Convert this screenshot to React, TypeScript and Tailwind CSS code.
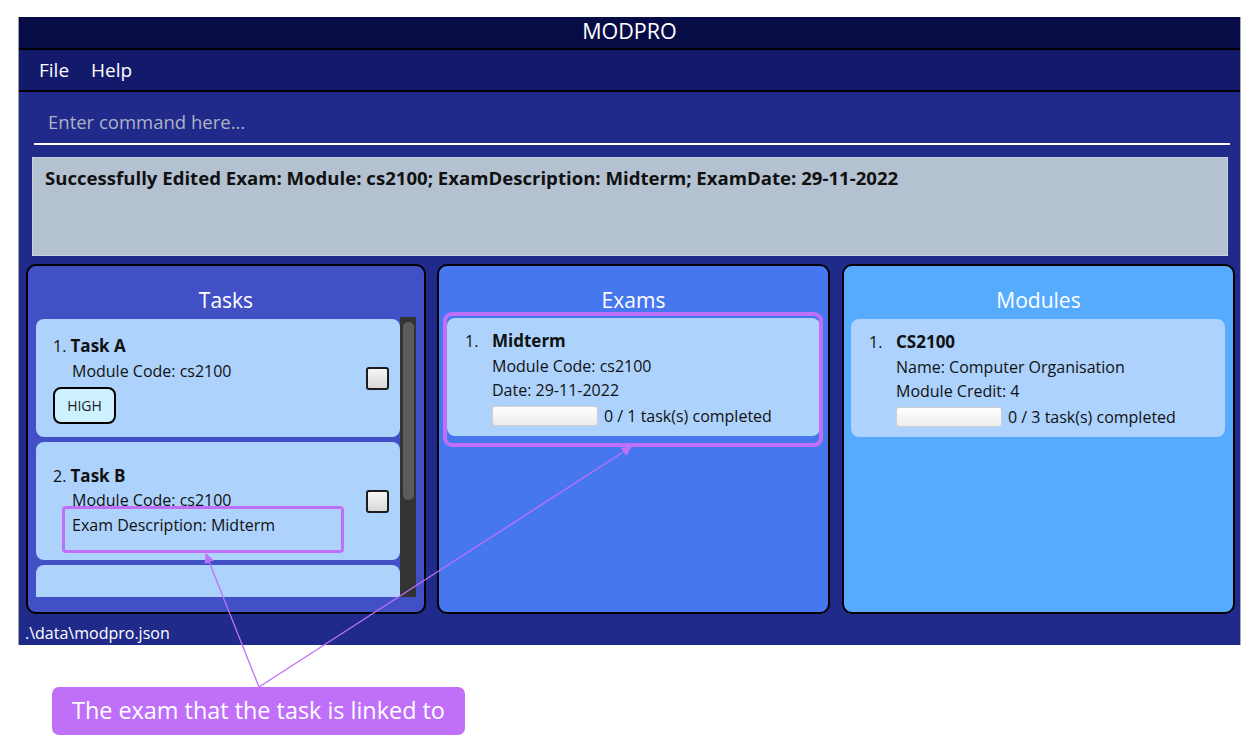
import React from 'react';

const font = { fontFamily: '"Open Sans", "Noto Sans", sans-serif' };

const Checkbox: React.FC = () => (
  <div className="w-[23px] h-[23px] shrink-0 rounded-[3px] border-2 border-[#1c1c1c] bg-gradient-to-b from-[#f6f6f6] to-[#d8d8d8]" />
);

const Progress: React.FC<{ label: string }> = ({ label }) => (
  <div className="flex items-center mt-[4px] h-[20px]">
    <div className="w-[106px] h-[20px] rounded-[3px] border border-[#cfcfcf] bg-gradient-to-b from-[#ffffff] to-[#ececec]" />
    <span className="ml-[6px] leading-[20px]">{label}</span>
  </div>
);

const Panel: React.FC<{ title: string; bg: string; children: React.ReactNode }> = ({ title, bg, children }) => (
  <div className={`flex flex-col h-[350px] border-2 border-black rounded-[10px] ${bg}`}>
    <div className="pt-[22px] mb-[5px] leading-[24px] text-[21px] text-white text-center">{title}</div>
    {children}
  </div>
);

const InfoCard: React.FC<{ name: string; lines: string[]; progress: string; bg: string }> = ({ name, lines, progress, bg }) => (
  <div className={`h-[118px] flex items-center rounded-[8px] pl-[18px] ${bg}`}>
    <div className="flex flex-col">
      <div className="flex leading-[26px]">
        <span className="w-[27px]">1.</span>
        <span className="font-bold text-[17px]">{name}</span>
      </div>
      <div className="pl-[27px]">
        {lines.map((l) => (
          <div key={l} className="leading-[24px]">{l}</div>
        ))}
        <Progress label={progress} />
      </div>
    </div>
  </div>
);

export default function App() {
  return (
    <div className="relative w-[1257px] h-[742px] bg-white pt-[17px] pl-[19px] text-[#111]" style={font}>
      {/* app window */}
      <div className="w-[1221px] h-[628px] flex flex-col shadow-[1px_0_0_#a8a8a8,-1px_0_0_#9a9a9a]">
        <div className="h-[31px] shrink-0 bg-[#070c47] text-white text-[21.5px] leading-[28px] text-center border-b-2 border-black box-content">
          MODPRO
        </div>
        <div className="h-[40px] shrink-0 bg-[#131a6b] border-b-2 border-black box-content flex items-center pl-[20px] gap-[22px] text-white text-[19px] font-medium">
          <span>File</span>
          <span>Help</span>
        </div>

        <div className="flex-1 flex flex-col bg-[#1f2a8a]">
          {/* command box */}
          <div className="ml-[15px] mr-[10px] pt-[18px] pb-[9px] border-b-2 border-white">
            <div className="pl-[14px] leading-[24px] text-[18.5px] text-[#aeb2c4]">Enter command here...</div>
          </div>

          {/* result display */}
          <div className="mt-[12px] ml-[13px] mr-[12px] h-[99px] bg-[#b3c1d1] border border-[#c9d3de] pl-[12px] pt-[8px]">
            <div className="leading-[24px] text-[18.6px] font-bold text-[#111]">
              Successfully Edited Exam: Module: cs2100; ExamDescription: Midterm; ExamDate: 29-11-2022
            </div>
          </div>

          {/* panels */}
          <div className="mt-[8px] ml-[7px] mr-[5px] flex gap-[11px] text-[16px]">
            <div className="w-[400px]">
              <Panel title="Tasks" bg="bg-[#4250c5]">
                <div className="flex h-[280px] pl-[8px] pr-[8px]">
                  <div className="flex-1 overflow-hidden pt-[2px] flex flex-col gap-[5px]">
                    <div className="h-[118px] shrink-0 flex items-center bg-[#add3fd] rounded-[8px] pl-[17px] pr-[11px]">
                      <div className="flex-1 flex flex-col">
                        <div className="leading-[26px] text-[16px]">
                          1. <span className="font-bold text-[17px]">Task A</span>
                        </div>
                        <div className="pl-[19px] leading-[24px]">Module Code: cs2100</div>
                        <div className="mt-[4px] w-[63px] h-[37px] flex items-center justify-center border-2 border-black rounded-[8px] bg-[#cdf1ff] text-[14px] text-[#222]">
                          HIGH
                        </div>
                      </div>
                      <Checkbox />
                    </div>
                    <div className="h-[118px] shrink-0 flex items-center bg-[#add3fd] rounded-[8px] pl-[17px] pr-[11px]">
                      <div className="flex-1 flex flex-col">
                        <div className="leading-[24px] text-[16px]">
                          2. <span className="font-bold text-[17px]">Task B</span>
                        </div>
                        <div className="pl-[19px] leading-[25px]">Module Code: cs2100</div>
                        <div className="pl-[19px] leading-[25px]">Exam Description: Midterm</div>
                      </div>
                      <Checkbox />
                    </div>
                    <div className="h-[118px] shrink-0 bg-[#add3fd] rounded-[8px]" />
                  </div>
                  <div className="w-[16px] shrink-0 bg-[#333333]">
                    <div className="ml-[3px] mt-[5px] w-[11px] h-[178px] rounded-[5px] bg-[#5b5b5b]" />
                  </div>
                </div>
              </Panel>
            </div>

            <div className="w-[393px]">
              <Panel title="Exams" bg="bg-[#4677ef]">
                <div className="px-[8px] pt-[1px]">
                  <InfoCard
                    name="Midterm"
                    lines={['Module Code: cs2100', 'Date: 29-11-2022']}
                    progress="0 / 1 task(s) completed"
                    bg="bg-[#add3fd]"
                  />
                </div>
              </Panel>
            </div>

            <div className="w-[393px] ml-[1px]">
              <Panel title="Modules" bg="bg-[#56abff]">
                <div className="pl-[7px] pr-[8px] pt-[2px]">
                  <InfoCard
                    name="CS2100"
                    lines={['Name: Computer Organisation', 'Module Credit: 4']}
                    progress="0 / 3 task(s) completed"
                    bg="bg-[#acd2fd]"
                  />
                </div>
              </Panel>
            </div>
          </div>

          {/* status bar */}
          <div className="pl-[6px] pt-[7px] leading-[24px] text-[16px] text-white">.\data\modpro.json</div>
        </div>
      </div>

      {/* callout */}
      <div className="mt-[42px] ml-[33px] w-[413px] h-[48px] rounded-[7px] bg-[#c070f8] flex items-center justify-center text-white text-[23.4px]">
        The exam that the task is linked to
      </div>

      {/* highlight outlines */}
      <div className="absolute left-[62px] top-[506px] w-[282px] h-[47px] border-[3px] border-[#c070f8] rounded-[4px] pointer-events-none" />
      <div className="absolute left-[443px] top-[312px] w-[380px] h-[135px] border-[4px] border-[#c070f8] rounded-[9px] pointer-events-none" />

      <svg className="absolute left-0 top-0 pointer-events-none" width="1257" height="742">
        <defs>
          <marker id="arr" viewBox="0 0 10 10" refX="9" refY="5" markerWidth="10" markerHeight="10" markerUnits="userSpaceOnUse" orient="auto">
            <path d="M0,0 L10,5 L0,10 z" fill="#c070f8" />
          </marker>
        </defs>
        <line x1="259" y1="687" x2="206" y2="554" stroke="#c070f8" strokeWidth="1.3" markerEnd="url(#arr)" />
        <line x1="259" y1="687" x2="631" y2="447" stroke="#c070f8" strokeWidth="1.3" markerEnd="url(#arr)" />
      </svg>
    </div>
  );
}
